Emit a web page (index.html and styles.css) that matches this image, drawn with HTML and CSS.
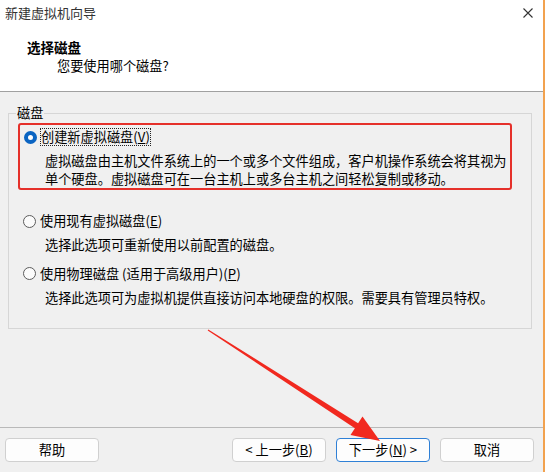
FILE: index.html
```html
<!DOCTYPE html>
<html lang="zh-CN">
<head>
<meta charset="utf-8">
<title>新建虚拟机向导</title>
<link rel="stylesheet" href="styles.css">
</head>
<body>
<div class="window">
  <div class="top">
    <div class="titlebar">
      <span class="title">新建虚拟机向导</span>
      <svg class="close" width="10" height="10" viewBox="0 0 10 10"><path d="M0.5 0.5 L9.5 9.5 M9.5 0.5 L0.5 9.5" stroke="#333" stroke-width="1.1" fill="none"/></svg>
    </div>
    <div class="header">
      <div class="h-title">选择磁盘</div>
      <div class="h-sub">您要使用哪个磁盘?</div>
    </div>
  </div>
  <div class="body">
    <fieldset class="group">
      <legend class="legend">磁盘</legend>
      <div class="mark">
        <div class="row">
          <span class="radio checked"></span>
          <span class="label focus">创建新虚拟磁盘(<u>V</u>)</span>
        </div>
        <div class="desc">虚拟磁盘由主机文件系统上的一个或多个文件组成，客户机操作系统会将其视为<br>单个硬盘。虚拟磁盘可在一台主机上或多台主机之间轻松复制或移动。</div>
      </div>
      <div class="option opt2">
        <div class="row">
          <span class="radio"></span>
          <span class="label">使用现有虚拟磁盘(<u>E</u>)</span>
        </div>
        <div class="desc">选择此选项可重新使用以前配置的磁盘。</div>
      </div>
      <div class="option opt3">
        <div class="row">
          <span class="radio"></span>
          <span class="label">使用物理磁盘 (适用于高级用户)(<u>P</u>)</span>
        </div>
        <div class="desc">选择此选项可为虚拟机提供直接访问本地硬盘的权限。需要具有管理员特权。</div>
      </div>
    </fieldset>
  </div>
  <div class="footer">
    <button class="btn help">帮助</button>
    <button class="btn">&lt; 上一步(<u>B</u>)</button>
    <button class="btn default">下一步(<u>N</u>) &gt;</button>
    <button class="btn">取消</button>
  </div>
  <svg class="arrow" width="545" height="472" viewBox="0 0 545 472">
    <polygon points="208.3,329.5 358.1,423.3 362.5,416.6 380,441 350.5,435 354.9,428.3 207.7,330.5" fill="#f1291f"/>
  </svg>
</div>
</body>
</html>
```
FILE: styles.css
```css
html, body {
  margin: 0;
  padding: 0;
}
body {
  width: 545px;
  height: 472px;
  overflow: hidden;
  font-family: "Noto Sans CJK SC", "Microsoft YaHei", sans-serif;
  font-size: 13.2px;
  color: #000;
  background: #f0f0f0;
}
.window {
  position: relative;
  width: 545px;
  height: 472px;
  box-sizing: border-box;
  border-right: 2px solid #f2a24f;
  background: #f0f0f0;
  display: flex;
  flex-direction: column;
}
.top {
  background: #fff;
  height: 92px;
  box-sizing: border-box;
  border-bottom: 1px solid #a0a0a0;
}
.titlebar {
  height: 26px;
  display: flex;
  align-items: center;
  justify-content: space-between;
  padding: 0 10px 0 5px;
}
.title {
  font-size: 13px;
  line-height: 18px;
  color: #333;
}
.close {
  display: block;
}
.header {
  padding: 12px 0 0 27px;
}
.h-title {
  font-size: 13.5px;
  font-weight: bold;
  line-height: 18px;
}
.h-sub {
  margin-top: 1px;
  padding-left: 30px;
  line-height: 18px;
}
.body {
  flex: 1;
  padding-top: 12px;
}
.group {
  margin: 0 11px 0 8px;
  padding: 0 0 22px 0;
  border: 1px solid #d6d6d6;
  min-width: 0;
}
.legend {
  margin-left: 7px;
  padding: 0 1px;
  line-height: 18px;
}
.mark {
  margin: 1px 19px 0 9px;
  border: 2px solid #e5302a;
  border-radius: 3px;
  padding: 2px 4px 1px 4px;
}
.option {
  margin-left: 14px;
}
.opt2 {
  margin-top: 21px;
}
.opt3 {
  margin-top: 10px;
}
.row {
  height: 20px;
  display: flex;
  align-items: center;
}
.radio {
  width: 13px;
  height: 13px;
  box-sizing: border-box;
  border-radius: 50%;
  border: 1px solid #5c5c5c;
  background: #fbfbfb;
  margin-right: 4px;
  flex: none;
}
.radio.checked {
  border: 4px solid #0a64c2;
  background: #fff;
}
.label {
  line-height: 16px;
  white-space: nowrap;
}
.label.focus {
  outline: 1px dotted #222;
  outline-offset: 0;
}
.desc {
  margin-top: 5px;
  padding-left: 21px;
  line-height: 17.5px;
  white-space: nowrap;
}
.option .desc {
  padding-left: 22px;
}
.footer {
  height: 45px;
  box-sizing: border-box;
  border-top: 1px solid #b9b9b9;
  padding: 10px 9px 0 5px;
  display: flex;
  align-items: flex-start;
  gap: 10px;
}
.btn {
  width: 94px;
  height: 24px;
  box-sizing: border-box;
  border: 1px solid #d0d0d0;
  border-radius: 4px;
  background: #fdfdfd;
  font-family: "Noto Sans CJK SC", "Microsoft YaHei", sans-serif;
  font-size: 13.2px;
  color: #000;
  padding: 0;
  line-height: 20px;
}
.btn.help {
  margin-right: auto;
}
.btn.default {
  border-color: #2f80d6;
}
.arrow {
  position: absolute;
  left: 0;
  top: 0;
  pointer-events: none;
}
```
